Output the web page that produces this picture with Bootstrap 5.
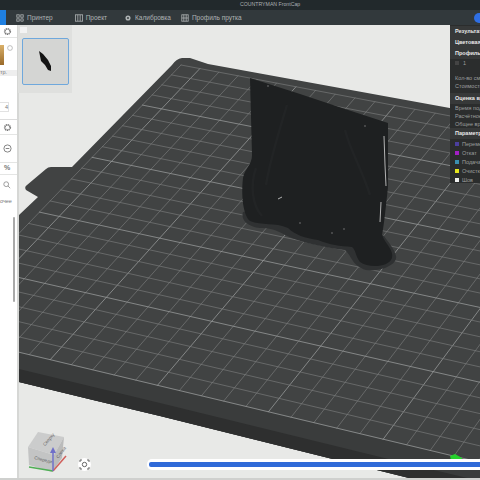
<!DOCTYPE html>
<html lang="ru">
<head>
  <meta charset="UTF-8">
  <title>COUNTRYMAN FrontCap</title>
  <link href="https://cdn.jsdelivr.net/npm/bootstrap@5.3.3/dist/css/bootstrap.min.css" rel="stylesheet">
  <style>
    html, body { height: 480px; overflow: hidden; }
    body { font-family: "Liberation Sans", Arial, sans-serif; background: #e8e9e7; }
    .app-shell { width: 480px; height: 480px; }
    .title-bar { height: 10px; background: #22292c; color: #aab0b2; font-size: 5.2px; line-height: 9px; padding-left: 240px; }
    .tool-bar { height: 15px; background: #32393c; color: #aeb3b4; font-size: 6.5px; line-height: 15px; }
    .tool-first { width: 6px; height: 15px; background: #1f7fe0; }
    .tool-item { gap: 3px; }
    .tool-item svg { width: 8px; height: 8px; }
    .tool-printer { margin-left: 10px; }
    .tool-project { margin-left: 22px; }
    .tool-calib { margin-left: 17px; }
    .tool-profile { margin-left: 10px; }
    .tool-pill { position: absolute; right: -4px; top: 3px; width: 10px; height: 10px; border-radius: 50%; background: #2f6fe4; }
    .side-panel { width: 19px; background: #fff; border-right: 2px solid #d6d7d5; font-size: 5.5px; color: #777; }
    .side-row { padding-right: 3px; border-bottom: 1px solid #e4e5e4; }
    .side-gear { height: 13px; }
    .side-card { height: 32px; padding-top: 7px; padding-right: 4px; }
    .side-band { height: 6px; line-height: 5px; background: #eeeeee; }
    .side-input { height: 44px; padding-top: 26px; border-bottom: 1px solid #dcdcdc; }
    .side-box { display: block; width: 9px; height: 10px; line-height: 9px; border: 1px solid #e2e2e2; border-left: 0; text-align: right; }
    .side-gear-b { height: 15px; }
    .side-minus { height: 28px; }
    .side-pct { height: 12px; font-size: 7px; font-weight: 700; }
    .side-find { height: 20px; padding-right: 3px; }
    .side-more { height: 12px; line-height: 12px; white-space: nowrap; overflow: hidden; }
    .side-swatch { width: 4px; height: 20px; background: linear-gradient(180deg,#d9b069,#9a6a2a); }
    .side-scroll { position: absolute; left: 13px; top: 192px; width: 2px; height: 85px; background: #a9a9a9; border-radius: 1px; }
    .view-area { width: 461px; height: 453px; }
    .view-area > svg { display: block; filter: blur(.4px); }
    .thumb-panel { position: absolute; left: -1px; top: 0; width: 54px; height: 68px; background: #dfe0de; }
    .thumb-eye { position: absolute; left: 2px; top: 2px; width: 7px; height: 6px; background: #f3f3f3; }
    .thumb-card { position: absolute; left: 4px; top: 13px; width: 47px; height: 47px; background: #d4d5d3; border: 1px solid #6fa8dc; border-radius: 2px; }
    .result-panel { position: absolute; right: 0; top: 0; width: 30px; height: 158px; padding-top: 1px; background: #2b2d2d; color: #9c9e9e; font-size: 5.5px; line-height: 8px; overflow: hidden; white-space: nowrap; }
    .result-head { background: #373939; color: #e8e8e8; font-weight: 700; padding-left: 5px; line-height: 11px; }
    .result-line { padding-left: 5px; }
    .result-one { margin-bottom: 7px; }
    .result-cost { margin-bottom: 3px; }
    .result-key { height: 9px; gap: 3px; }
    .legend-dot { width: 4px; height: 4px; flex: none; }
    .focus-btn { position: absolute; left: 59px; top: 433px; width: 13px; height: 13px; border-radius: 50%; background: #fff; }
    .cube-box { position: absolute; left: 0; top: 400px; }
    .layer-bar { position: absolute; left: 128px; right: 0; top: 434px; height: 11px; background: #fff; border-radius: 5px 0 0 5px; padding: 3px 0 3px 2px; }
    .layer-fill { height: 5px; background: #2f6ad8; border-radius: 2px 0 0 2px; }
    .foot-line { height: 2px; background: #cfd0ce; }
  </style>
</head>
<body>

<div class="app-shell d-flex flex-column">
  <div class="title-bar text-nowrap">COUNTRYMAN FrontCap</div>

  <div class="tool-bar d-flex align-items-center position-relative text-nowrap">
    <div class="tool-first"></div>
    <div class="tool-item tool-printer d-flex align-items-center">
      <svg viewBox="0 0 10 10" fill="none" stroke="#aeb3b4"><rect x="1" y="1" width="3" height="3"/><rect x="6" y="1" width="3" height="3"/><rect x="1" y="6" width="3" height="3"/><path d="M6 6h3v3H6z"/></svg>Принтер
    </div>
    <div class="tool-item tool-project d-flex align-items-center">
      <svg viewBox="0 0 10 10" fill="none" stroke="#aeb3b4"><rect x=".5" y="1" width="9" height="8"/><path d="M3.5 1v8M6.5 1v8"/></svg>Проект
    </div>
    <div class="tool-item tool-calib d-flex align-items-center">
      <svg viewBox="0 0 10 10" fill="#aeb3b4"><circle cx="5" cy="5" r="3.2"/><circle cx="5" cy="5" r="1.2" fill="#32393c"/></svg>Калибровка
    </div>
    <div class="tool-item tool-profile d-flex align-items-center">
      <svg viewBox="0 0 10 10" fill="none" stroke="#aeb3b4"><rect x="1" y="1" width="8" height="8"/><path d="M3.5 1v8M6.5 1v8M1 5h8"/></svg>Профиль прутка
    </div>
    <div class="tool-pill"></div>
  </div>

  <div class="d-flex flex-grow-1">
    <div class="side-panel position-relative flex-shrink-0">
      <div class="side-row side-gear d-flex align-items-center justify-content-center"><svg width="9" height="9" viewBox="0 0 10 10"><circle cx="5" cy="5" r="3" fill="none" stroke="#777" stroke-width="2" stroke-dasharray="1.4 .6"/></svg></div>
      <div class="side-card d-flex justify-content-between align-items-start">
        <div class="side-swatch"></div>
        <svg width="6" height="6" viewBox="0 0 10 10"><circle cx="5" cy="5" r="4" fill="none" stroke="#999"/></svg>
      </div>
      <div class="side-band text-nowrap overflow-hidden">тр.</div>
      <div class="side-input"><span class="side-box">4</span></div>
      <div class="side-row side-gear-b d-flex align-items-center justify-content-center"><svg width="9" height="9" viewBox="0 0 10 10"><circle cx="5" cy="5" r="3" fill="none" stroke="#777" stroke-width="2" stroke-dasharray="1.4 .6"/></svg></div>
      <div class="side-row side-minus d-flex align-items-center justify-content-center"><svg width="9" height="9" viewBox="0 0 10 10" fill="none" stroke="#777"><circle cx="5" cy="5" r="4"/><path d="M3 5h4"/></svg></div>
      <div class="side-row side-pct d-flex align-items-center justify-content-center">%</div>
      <div class="side-find d-flex align-items-center justify-content-center"><svg width="8" height="8" viewBox="0 0 10 10" fill="none" stroke="#888"><circle cx="4" cy="4" r="3"/><path d="M6.2 6.2 9 9"/></svg></div>
      <div class="side-more">очее</div>
      <div class="side-scroll"></div>
    </div>

    <div class="view-area position-relative">
      <svg id="scene" width="461" height="453" viewBox="19 25 461 453">
        <defs>
          <linearGradient id="edgeShade" gradientUnits="userSpaceOnUse" x1="200" y1="395" x2="193" y2="427">
            <stop offset="0" stop-color="#3a3c3c"/>
            <stop offset=".45" stop-color="#2c2d2d"/>
            <stop offset="1" stop-color="#333434"/>
          </linearGradient>
        </defs>
        <!-- bed body -->
        <path fill="#414343" d="M19 215 38 197 26 190Q24 187 27 185L46 169Q48 167 51 167H72L172 65Q176 59 182 58L190 58 208 64 480 113.5V480H417L160 416 93 400 19 382Z"/>
        <path fill="#3a3c3c" d="M19 353 447 455 480 463V480H417L160 416 93 400 19 382Z"/>
        <path fill="#2e2f2f" d="M19 369 160 403 417 466 480 481V480H417L160 416 93 400 19 382Z"/>
        <g id="gridLines" stroke-linecap="round"></g>
        <!-- printed model -->
        <path fill="#2f3132" d="M243 212C240 222 252 228 262 228 275 228 282 234 292 238 308 244 330 248 345 250 352 256 352 266 366 270 382 272 398 264 396 256 394 248 388 242 384 236L300 200Z"/>
        <path fill="#1e2021" d="M250 78 300 94 345 109 388 123 388 187C386 205 384 225 382 235 386 245 394 250 392 258 388 268 368 268 360 262 355 255 356 250 352 247 340 246 330 245 318 240 305 238 295 235 288 228 275 222 262 226 250 221 243 215 241 195 243 178 245 168 252 165 252 155Z"/>
        <path fill="none" stroke="#26282a" stroke-width="2.5" opacity=".5" d="M287 105C278 135 270 160 266 185M345 130C350 150 360 165 370 195M256 168C250 185 252 205 262 216"/>
        <path fill="none" stroke="#d8d8d8" stroke-width=".8" d="M384 136 385 165 386 186M381 202 380 222M278 199 282 197"/>
        <g fill="#8a8a8a"><circle cx="268" cy="86" r=".7"/><circle cx="300" cy="223" r=".7"/><circle cx="332" cy="233" r=".7"/><circle cx="344" cy="229" r=".7"/><circle cx="365" cy="126" r=".7"/></g>
        <!-- first layer marker -->
        <path fill="#25d02c" d="M450 456 455 454 462 458 462 460H451Z"/>
      </svg>

      <div class="thumb-panel">
        <div class="thumb-eye"></div>
        <div class="thumb-card">
          <svg width="45" height="45" viewBox="0 0 45 45"><path fill="#141414" d="M16 12 20 15 25 21 28 27 28 32 25 31 22 26 18 22Z"/></svg>
        </div>
      </div>

      <div class="result-panel">
        <div class="result-head">Результаты</div>
        <div class="result-head">Цветовая схема</div>
        <div class="result-head">Профиль</div>
        <div class="result-line result-one d-flex align-items-center gap-1"><span class="legend-dot" style="background:#444"></span>1</div>
        <div class="result-line">Кол-во смен</div>
        <div class="result-line result-cost">Стоимость</div>
        <div class="result-head">Оценка времени</div>
        <div class="result-line">Время подг</div>
        <div class="result-line">Расчётное</div>
        <div class="result-line">Общее время</div>
        <div class="result-head">Параметры</div>
        <div class="result-line result-key d-flex align-items-center"><span class="legend-dot" style="background:#4b3f9e"></span>Перемещ</div>
        <div class="result-line result-key d-flex align-items-center"><span class="legend-dot" style="background:#a11fc4"></span>Откат</div>
        <div class="result-line result-key d-flex align-items-center"><span class="legend-dot" style="background:#3b8fb0"></span>Подача</div>
        <div class="result-line result-key d-flex align-items-center"><span class="legend-dot" style="background:#e6e61e"></span>Очистка</div>
        <div class="result-line result-key d-flex align-items-center"><span class="legend-dot" style="background:#eee"></span>Шов</div>
      </div>

      <div class="cube-box">
        <svg width="60" height="52" viewBox="19 425 60 52">
          <path fill="#cbcccc" d="M38 432 64 437 54 455 28 447Z"/>
          <path fill="#c3c4c4" d="M28 447 54 455 52 472 29 465Z"/>
          <path fill="#babbbb" d="M64 437 54 455 52 472 62 458Z"/>
          <path stroke="#4fae55" stroke-width="1.5" d="M53 471 29 467"/>
          <path stroke="#d0605c" stroke-width="1.5" d="M53 471 66 456"/>
          <path stroke="#6f6fc8" stroke-width="1.5" d="M53 471V450"/>
          <path fill="#6f6fc8" d="M53 447 50 453H56Z"/>
          <text x="34" y="459" font-size="4.5" fill="#666" transform="rotate(14 34 459)">Спереди</text>
          <text x="42" y="444" font-size="4.5" fill="#666" transform="rotate(-50 46 442)">Сверху</text>
          <text x="56" y="458" font-size="4.5" fill="#666" transform="rotate(-55 58 456)">Слева</text>
        </svg>
      </div>

      <div class="focus-btn d-flex align-items-center justify-content-center">
        <svg width="11" height="11" viewBox="0 0 11 11" fill="none" stroke="#666"><circle cx="5.5" cy="5.5" r="2.2"/><path d="M1 3V1H3M8 1h2v2M10 8v2H8M3 10H1V8"/></svg>
      </div>

      <div class="layer-bar"><div class="layer-fill"></div></div>
    </div>
  </div>

  <div class="foot-line"></div>
</div>

<script src="https://cdn.jsdelivr.net/npm/bootstrap@5.3.3/dist/js/bootstrap.bundle.min.js"></script>
<script>
  // grid on the bed, mapped from the unit square through the four corners
  const tl = [181, 65], tr = [799, 182], br = [600, 491], bl = [-74, 330];
  const COLS = 30, ROWS = 24;

  function project(u, v) {
    const dx1 = tr[0] - br[0], dx2 = bl[0] - br[0], sx = tl[0] - tr[0] + br[0] - bl[0];
    const dy1 = tr[1] - br[1], dy2 = bl[1] - br[1], sy = tl[1] - tr[1] + br[1] - bl[1];
    const d = dx1 * dy2 - dx2 * dy1;
    const g = (sx * dy2 - dx2 * sy) / d, h = (dx1 * sy - sx * dy1) / d;
    const a = tr[0] - tl[0] + g * tr[0], b = bl[0] - tl[0] + h * bl[0];
    const e = tr[1] - tl[1] + g * tr[1], f = bl[1] - tl[1] + h * bl[1];
    const w = g * u + h * v + 1;
    return [(a * u + b * v + tl[0]) / w, (e * u + f * v + tl[1]) / w];
  }

  function line(p, q, major) {
    const stroke = major ? 'stroke="#969898" stroke-width=".8"' : 'stroke="#7b7d7d" stroke-width=".65"';
    return `<line x1="${p[0]}" y1="${p[1]}" x2="${q[0]}" y2="${q[1]}" ${stroke}/>`;
  }

  let lines = "";
  for (let i = 0; i <= COLS; i++) {
    lines += line(project(i / COLS, 0), project(i / COLS, 1), (i - 1) % 5 === 0);
  }
  for (let j = 0; j <= ROWS; j++) {
    lines += line(project(0, j / ROWS), project(1, j / ROWS), (ROWS - j) % 5 === 0);
  }
  document.getElementById("gridLines").innerHTML = lines;
</script>

</body>
</html>
